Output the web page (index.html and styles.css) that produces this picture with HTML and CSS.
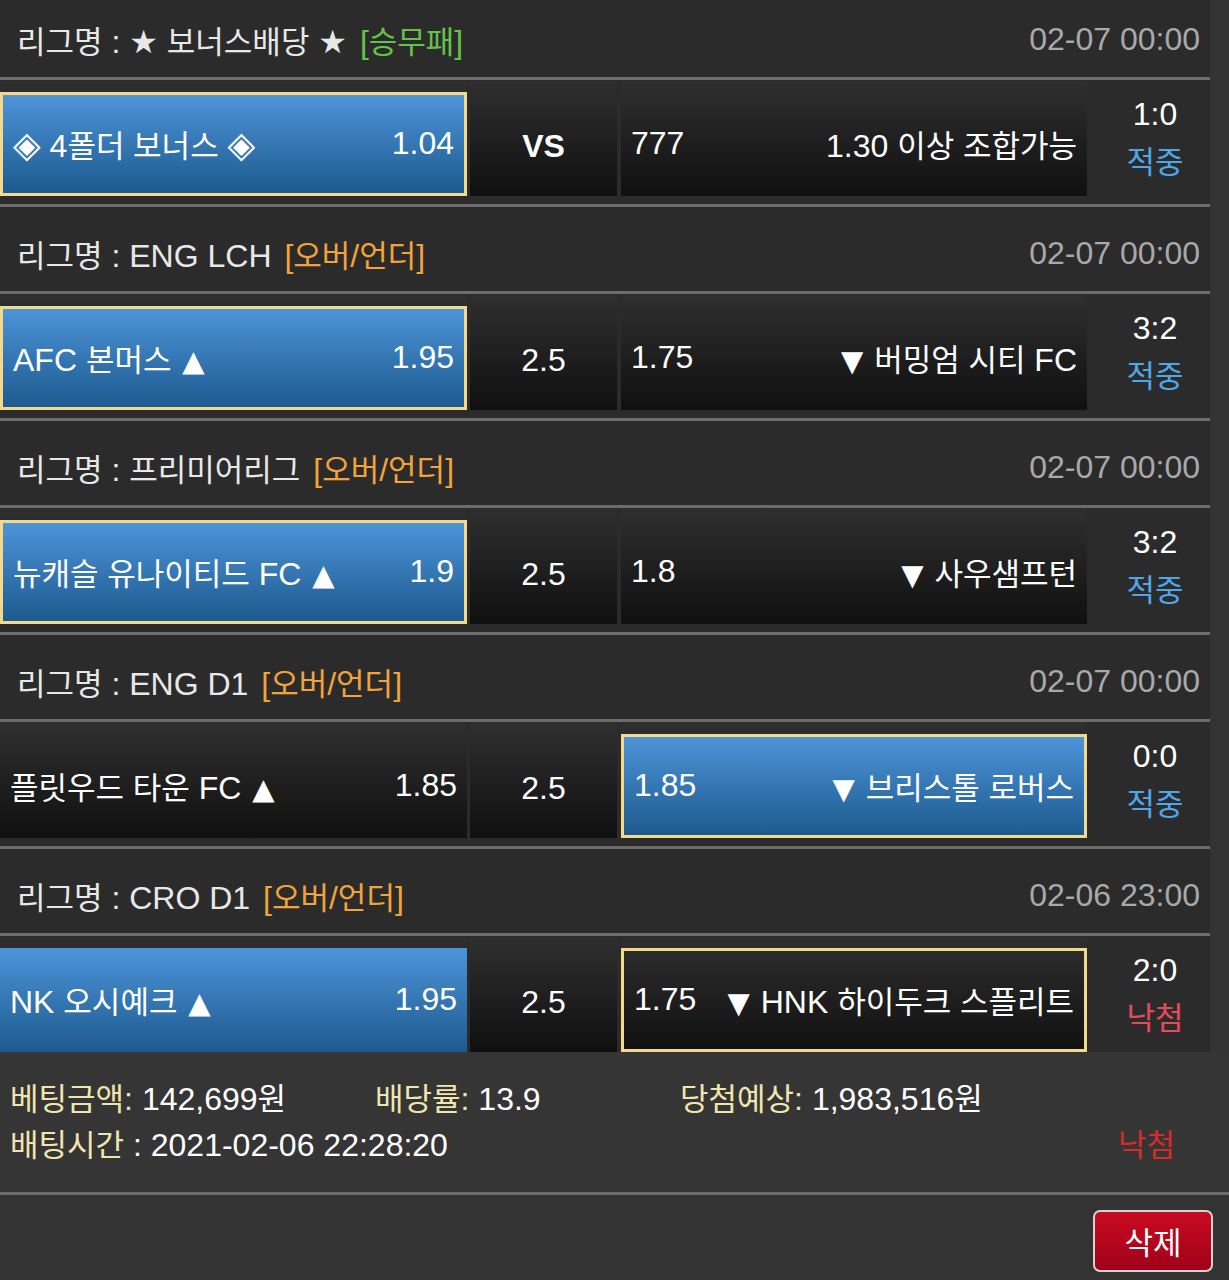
FILE: index.html
```html
<!DOCTYPE html>
<html lang="ko">
<head>
<meta charset="utf-8">
<title>배팅내역</title>
<link rel="stylesheet" href="styles.css">
</head>
<body>
<div class="list">

  <section class="blk">
    <div class="hdr">
      <div class="lg"><span class="k">리그명</span> : ★ <span class="k">보너스배당</span> ★ <span class="tag green">[<span class="k">승무패</span>]</span></div>
      <div class="dt">02-07 00:00</div>
    </div>
    <div class="row">
      <div class="cell c1"><div class="box blue sel"><span><span class="dia">◈</span> 4<span class="k">폴더 보너스</span> <span class="dia">◈</span></span><span>1.04</span></div></div>
      <div class="cell c2"><div class="box mid"><b class="vs">VS</b></div></div>
      <div class="cell c3"><div class="box"><span>777</span><span>1.30 <span class="k">이상 조합가능</span></span></div></div>
      <div class="score"><div>1:0</div><div class="hit k">적중</div></div>
    </div>
  </section>

  <section class="blk">
    <div class="hdr">
      <div class="lg"><span class="k">리그명</span> : ENG LCH <span class="tag orange">[<span class="k">오버</span>/<span class="k">언더</span>]</span></div>
      <div class="dt">02-07 00:00</div>
    </div>
    <div class="row">
      <div class="cell c1"><div class="box blue sel"><span>AFC <span class="k">본머스</span> <span class="tri">▲</span></span><span>1.95</span></div></div>
      <div class="cell c2"><div class="box mid">2.5</div></div>
      <div class="cell c3"><div class="box"><span>1.75</span><span><span class="tri">▼</span> <span class="k">버밍엄 시티</span> FC</span></div></div>
      <div class="score"><div>3:2</div><div class="hit k">적중</div></div>
    </div>
  </section>

  <section class="blk">
    <div class="hdr">
      <div class="lg"><span class="k">리그명</span> : <span class="k">프리미어리그</span> <span class="tag orange">[<span class="k">오버</span>/<span class="k">언더</span>]</span></div>
      <div class="dt">02-07 00:00</div>
    </div>
    <div class="row">
      <div class="cell c1"><div class="box blue sel"><span><span class="k">뉴캐슬 유나이티드</span> FC <span class="tri">▲</span></span><span>1.9</span></div></div>
      <div class="cell c2"><div class="box mid">2.5</div></div>
      <div class="cell c3"><div class="box"><span>1.8</span><span><span class="tri">▼</span> <span class="k">사우샘프턴</span></span></div></div>
      <div class="score"><div>3:2</div><div class="hit k">적중</div></div>
    </div>
  </section>

  <section class="blk">
    <div class="hdr">
      <div class="lg"><span class="k">리그명</span> : ENG D1 <span class="tag orange">[<span class="k">오버</span>/<span class="k">언더</span>]</span></div>
      <div class="dt">02-07 00:00</div>
    </div>
    <div class="row">
      <div class="cell c1"><div class="box"><span><span class="k">플릿우드 타운</span> FC <span class="tri">▲</span></span><span>1.85</span></div></div>
      <div class="cell c2"><div class="box mid">2.5</div></div>
      <div class="cell c3"><div class="box blue sel"><span>1.85</span><span><span class="tri">▼</span> <span class="k">브리스톨 로버스</span></span></div></div>
      <div class="score"><div>0:0</div><div class="hit k">적중</div></div>
    </div>
  </section>

  <section class="blk">
    <div class="hdr">
      <div class="lg"><span class="k">리그명</span> : CRO D1 <span class="tag orange">[<span class="k">오버</span>/<span class="k">언더</span>]</span></div>
      <div class="dt">02-06 23:00</div>
    </div>
    <div class="row last">
      <div class="cell c1"><div class="box blue"><span>NK <span class="k">오시예크</span> <span class="tri">▲</span></span><span>1.95</span></div></div>
      <div class="cell c2"><div class="box mid">2.5</div></div>
      <div class="cell c3"><div class="box sel"><span>1.75</span><span><span class="tri">▼</span> HNK <span class="k">하이두크 스플리트</span></span></div></div>
      <div class="score"><div>2:0</div><div class="miss k">낙첨</div></div>
    </div>
  </section>

</div>

<div class="foot">
  <div class="fline">
    <div class="fi f1"><span class="lab k">베팅금액</span><span class="lab">:</span> 142,699<span class="k">원</span></div>
    <div class="fi f2"><span class="lab k">배당률</span><span class="lab">:</span> 13.9</div>
    <div class="fi"><span class="lab k">당첨예상</span><span class="lab">:</span> 1,983,516<span class="k">원</span></div>
  </div>
  <div class="fline between">
    <div class="fi"><span class="lab k">배팅시간</span> : 2021-02-06 22:28:20</div>
    <div class="fi lost k">낙첨</div>
  </div>
</div>

<div class="actions">
  <button class="btn" type="button"><span class="k">삭제</span></button>
</div>
</body>
</html>
```

FILE: styles.css
```css
html, body {
  margin: 0;
  padding: 0;
}
body {
  background: #333333;
  color: #ffffff;
  font-family: "Liberation Sans", "DejaVu Sans", "Noto Sans CJK KR", sans-serif;
  font-size: 32px;
  overflow: hidden;
}
.k {
  font-family: "Noto Sans CJK KR", sans-serif;
  font-size: 31px;
  letter-spacing: 0;
}
.list {
  width: 1210px;
  margin-top: -7px;
}
.hdr {
  height: 87px;
  display: flex;
  align-items: center;
  justify-content: space-between;
  padding: 8px 10px 0 17px;
  box-sizing: border-box;
  background: #2b2b2b;
  border-bottom: 3px solid #6c6c6c;
  color: #e8e8e8;
  white-space: nowrap;
}
.tag {
  margin-left: 4px;
}
.green { color: #63c24a; }
.orange { color: #f2a33a; }
.dt { color: #a9a9a9; }

.row {
  display: flex;
  padding: 1px 0 8px;
  border-bottom: 3px solid #6c6c6c;
  background: #2b2b2b;
}
.row.last {
  padding-bottom: 0;
  border-bottom: 0;
}
.cell {
  height: 115px;
  box-sizing: border-box;
  padding-top: 11px;
  background: linear-gradient(#2f2f2f, #101010);
  white-space: nowrap;
}
.c1 { width: 467px; }
.c2 { width: 147px; margin-left: 3px; }
.c3 { width: 466px; margin-left: 4px; }
.box {
  height: 100%;
  box-sizing: border-box;
  display: flex;
  align-items: center;
  justify-content: space-between;
  padding: 0 10px 2px;
}
.box.blue {
  background: linear-gradient(#4d94d8, #1d5a8f);
}
.box.sel {
  border: 3px solid #f3d98c;
}
.box.mid {
  justify-content: center;
  padding: 4px 0 0 0;
}
.vs {
  font-weight: bold;
  font-size: 32px;
}
.dia, .tri {
  font-family: "DejaVu Sans", sans-serif;
  line-height: 1;
}
.dia { font-size: 36px; }
.tri { font-size: 29px; margin: 0 2px; }

.score {
  width: 110px;
  padding: 10px 0 0 13px;
  display: flex;
  flex-direction: column;
  align-items: center;
  line-height: 46px;
}
.hit { color: #4fa6e8; }
.miss { color: #e64b5c; }

.foot {
  height: 143px;
  box-sizing: border-box;
  padding: 23px 0 0 10px;
  border-bottom: 3px solid #6c6c6c;
  background: #353535;
  line-height: 44px;
  white-space: nowrap;
}
.fline {
  display: flex;
}
.fline.between {
  justify-content: space-between;
  padding-right: 54px;
}
.f1 { width: 365px; }
.f2 { width: 305px; }
.lab { color: #f1e5ae; }
.lost { color: #d42b2b; }

.actions {
  display: flex;
  justify-content: flex-end;
  padding: 15px 16px 0 0;
}
.btn {
  width: 120px;
  height: 62px;
  box-sizing: border-box;
  border: 2px solid #d4d4d4;
  border-radius: 7px;
  background: linear-gradient(#c80b20, #a1001a);
  color: #ffffff;
  display: flex;
  align-items: center;
  justify-content: center;
  padding: 0 0 2px;
  cursor: pointer;
}
```
